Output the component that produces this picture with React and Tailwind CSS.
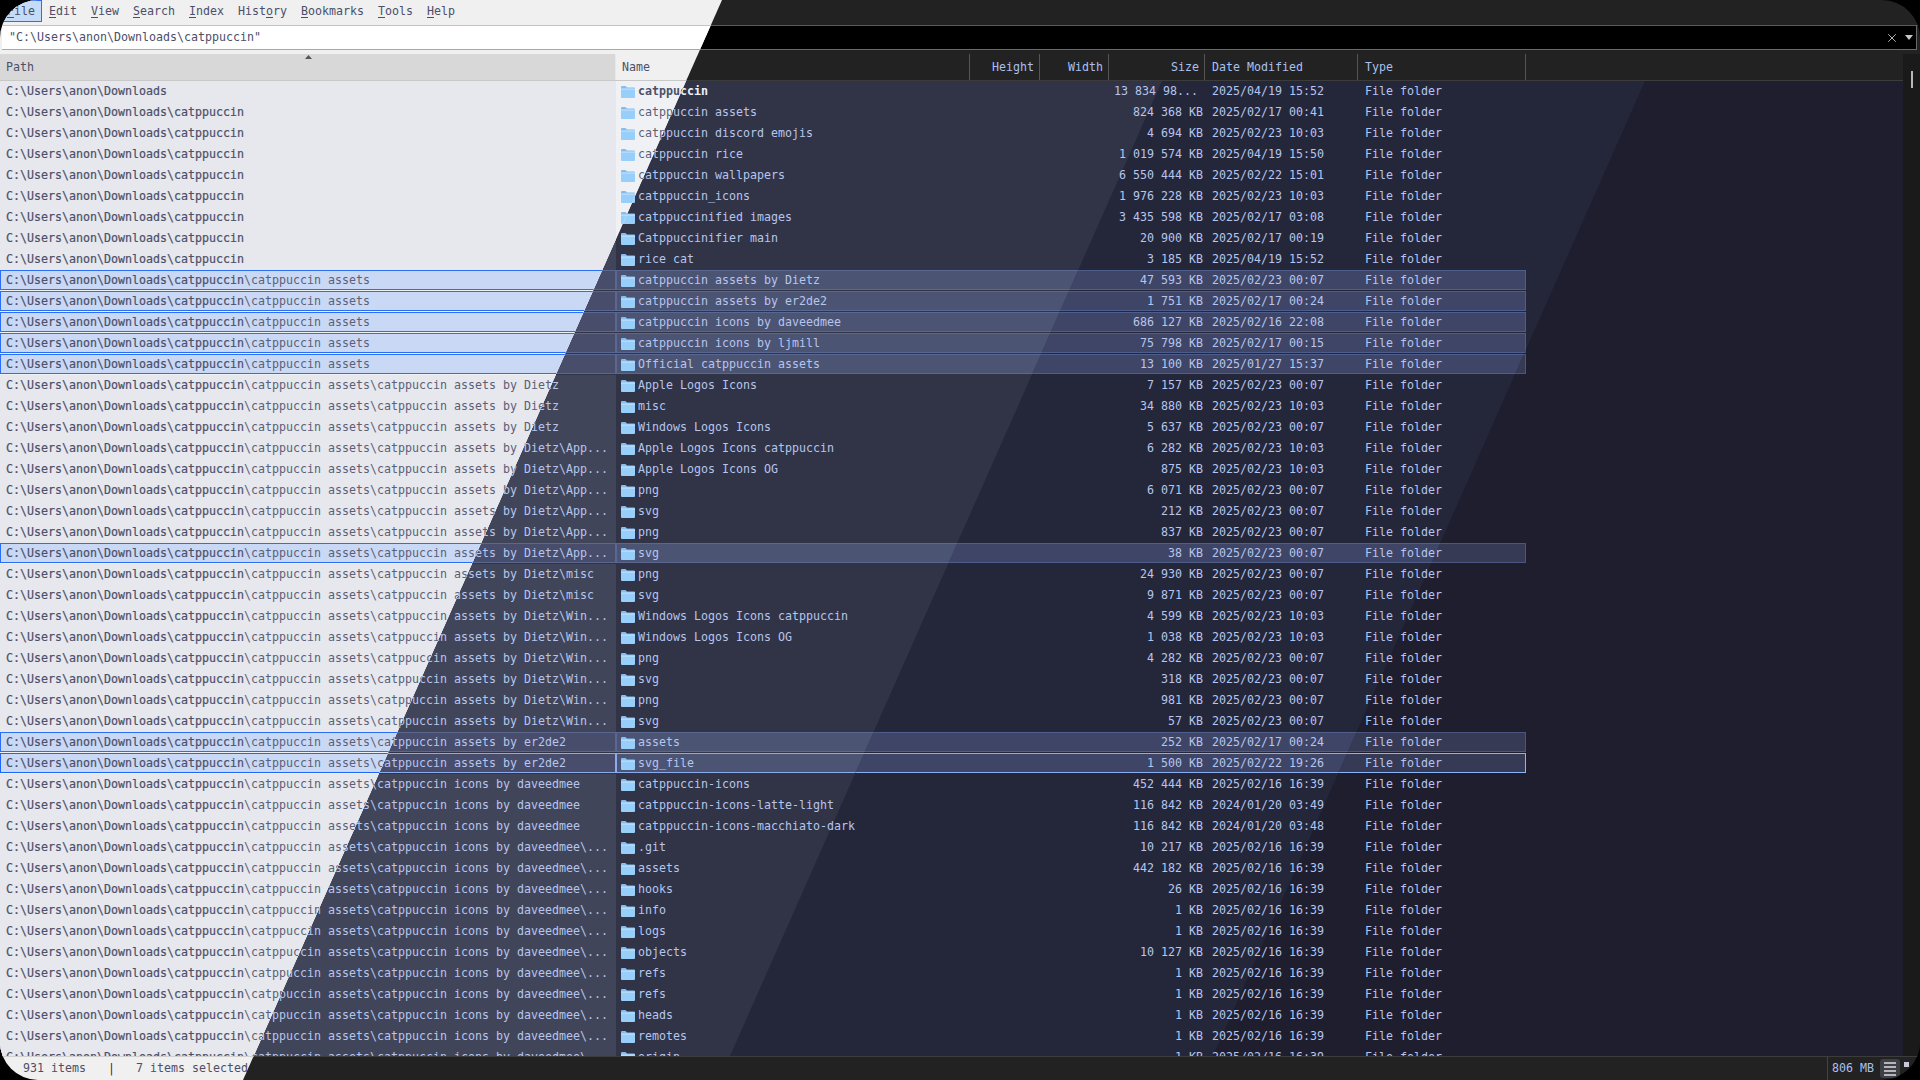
import React from 'react';
import { X } from 'lucide-react';

const ROOT = 'C:\\Users\\anon\\Downloads\\catppuccin';
const A = '\\catppuccin assets';
const D = A + '\\catppuccin assets by Dietz';
const E = A + '\\catppuccin assets by er2de2';
const M = A + '\\catppuccin icons by daveedmee';

const d0 = '2025/02/23 00:07';
const d1 = '2025/02/23 10:03';
const d2 = '2025/02/16 16:39';

// path suffix, name, size, modified, selection
const rows = [
  ['', 'catppuccin', '13 834 98...', '2025/04/19 15:52'],
  ['', 'catppuccin assets', '824 368 KB', '2025/02/17 00:41'],
  ['', 'catppuccin discord emojis', '4 694 KB', d1],
  ['', 'catppuccin rice', '1 019 574 KB', '2025/04/19 15:50'],
  ['', 'catppuccin wallpapers', '6 550 444 KB', '2025/02/22 15:01'],
  ['', 'catppuccin_icons', '1 976 228 KB', d1],
  ['', 'catppuccinified images', '3 435 598 KB', '2025/02/17 03:08'],
  ['', 'Catppuccinifier main', '20 900 KB', '2025/02/17 00:19'],
  ['', 'rice cat', '3 185 KB', '2025/04/19 15:52'],
  [A, 'catppuccin assets by Dietz', '47 593 KB', d0, 'sel'],
  [A, 'catppuccin assets by er2de2', '1 751 KB', '2025/02/17 00:24', 'sel'],
  [A, 'catppuccin icons by daveedmee', '686 127 KB', '2025/02/16 22:08', 'sel'],
  [A, 'catppuccin icons by ljmill', '75 798 KB', '2025/02/17 00:15', 'sel'],
  [A, 'Official catppuccin assets', '13 100 KB', '2025/01/27 15:37', 'sel'],
  [D, 'Apple Logos Icons', '7 157 KB', d0],
  [D, 'misc', '34 880 KB', d1],
  [D, 'Windows Logos Icons', '5 637 KB', d0],
  [D + '\\App...', 'Apple Logos Icons catppuccin', '6 282 KB', d1],
  [D + '\\App...', 'Apple Logos Icons OG', '875 KB', d1],
  [D + '\\App...', 'png', '6 071 KB', d0],
  [D + '\\App...', 'svg', '212 KB', d0],
  [D + '\\App...', 'png', '837 KB', d0],
  [D + '\\App...', 'svg', '38 KB', d0, 'sel'],
  [D + '\\misc', 'png', '24 930 KB', d0],
  [D + '\\misc', 'svg', '9 871 KB', d0],
  [D + '\\Win...', 'Windows Logos Icons catppuccin', '4 599 KB', d1],
  [D + '\\Win...', 'Windows Logos Icons OG', '1 038 KB', d1],
  [D + '\\Win...', 'png', '4 282 KB', d0],
  [D + '\\Win...', 'svg', '318 KB', d0],
  [D + '\\Win...', 'png', '981 KB', d0],
  [D + '\\Win...', 'svg', '57 KB', d0],
  [E, 'assets', '252 KB', '2025/02/17 00:24', 'sel'],
  [E, 'svg_file', '1 500 KB', '2025/02/22 19:26', 'focus'],
  [M, 'catppuccin-icons', '452 444 KB', d2],
  [M, 'catppuccin-icons-latte-light', '116 842 KB', '2024/01/20 03:49'],
  [M, 'catppuccin-icons-macchiato-dark', '116 842 KB', '2024/01/20 03:48'],
  [M + '\\...', '.git', '10 217 KB', d2],
  [M + '\\...', 'assets', '442 182 KB', d2],
  [M + '\\...', 'hooks', '26 KB', d2],
  [M + '\\...', 'info', '1 KB', d2],
  [M + '\\...', 'logs', '1 KB', d2],
  [M + '\\...', 'objects', '10 127 KB', d2],
  [M + '\\...', 'refs', '1 KB', d2],
  [M + '\\...', 'refs', '1 KB', d2],
  [M + '\\...', 'heads', '1 KB', d2],
  [M + '\\...', 'remotes', '1 KB', d2],
  [M + '\\...', 'origin', '1 KB', d2],
];

const COLS = 'grid grid-cols-[616px_354px_70px_69px_96px_153px_168px]';
const HEAD = ['Height', 'Width', 'Size'];

const menus = [
  ['', 'F', 'ile'],
  ['', 'E', 'dit'],
  ['', 'V', 'iew'],
  ['', 'S', 'earch'],
  ['', 'I', 'ndex'],
  ['Hist', 'o', 'ry'],
  ['', 'B', 'ookmarks'],
  ['', 'T', 'ools'],
  ['', 'H', 'elp'],
];

const FolderIcon = () => (
  <svg width="14" height="12" viewBox="0 0 14 12" className="shrink-0">
    <path d="M0 1a1 1 0 0 1 1-1h3.5l1.5 1.5h7a1 1 0 0 1 1 1V3H0z" fill="#86bcee" />
    <path d="M0 2.6h14V11a1 1 0 0 1-1 1H1a1 1 0 0 1-1-1z" fill="#97cefa" />
    <rect x="0" y="2.6" width="14" height="1" fill="#c4e3fc" />
  </svg>
);

// coloured row stripes of one catppuccin flavour, no text in here
const Stripes = ({ t }) => (
  <div className={`absolute inset-0 overflow-hidden ${t.clip} ${t.bg}`}>
    {rows.map((r, i) => (
      <div key={i} className="grid h-[21px] grid-cols-[616px_910px]">
        <div className={r[4] ? `h-[20px] border ${r[4] === 'focus' ? t.focus : t.selBorder} ${t.pathSel}` : `h-[21px] ${t.path}`} />
        <div className={r[4] ? `h-[20px] border ${r[4] === 'focus' ? t.focus : t.selBorder} ${t.sel}` : ''} />
      </div>
    ))}
  </div>
);

const frappe = {
  clip: '[clip-path:polygon(0_0,1162px_0,730px_100%,0_100%)]',
  bg: 'bg-[#303446]',
  path: 'bg-[#414559]',
  pathSel: 'bg-[#474d6b]',
  sel: 'bg-[#4c5474]',
  selBorder: 'border-[#5a6791]',
  focus: 'border-[#8caaee]',
};
const macchiato = {
  clip: '[clip-path:polygon(0_0,1645px_0,1213px_100%,0_100%)]',
  bg: 'bg-[#24273a]',
  path: 'bg-[#363a4f]',
  pathSel: 'bg-[#3e4566]',
  sel: 'bg-[#3e4566]',
  selBorder: 'border-[#4f5d8a]',
  focus: 'border-[#8aadf4]',
};
const mocha = {
  clip: '',
  bg: 'bg-[#1e1e2e]',
  path: 'bg-[#313244]',
  pathSel: 'bg-[#363a55]',
  sel: 'bg-[#363a55]',
  selBorder: 'border-[#4a5680]',
  focus: 'border-[#89b4fa]',
};
const latte = {
  clip: '',
  bg: 'bg-[#eff1f5]',
  path: 'bg-[#e6e8ed]',
  pathSel: 'bg-[#c9d9f5]',
  sel: 'bg-[#c9d9f5]',
  selBorder: 'border-[#2a6ef5]',
  focus: 'border-[#1e66f5]',
};

const PathText = ({ r, i, hi }) => (
  <div className="truncate pl-[6px]">
    <span className={`[-webkit-text-stroke:0.2px] ${hi}`}>{i === 0 ? 'C:\\Users\\anon\\Downloads' : ROOT}</span>
    {r[0]}
  </div>
);

const NameText = ({ r, i, hi }) => (
  <div className="flex items-center pl-[5px]">
    <FolderIcon />
    <span className={`ml-[3px] whitespace-pre ${i === 0 ? `font-bold ${hi}` : ''}`}>{r[1]}</span>
  </div>
);

const DarkWindow = () => (
  <div className="flex h-full flex-col bg-[#222222] text-[#b7c5ee]">
    <div className="h-[26px] border-b border-[#5a5a5a]" />
    <div className="flex h-[24px] items-center justify-end border-x border-b border-[#6a6a6a] bg-black pr-[3px] mr-[3px] ml-[2px]">
      <X size={14} strokeWidth={1.5} className="mr-[6px] text-[#cccccc]" />
      <svg width="8" height="5" viewBox="0 0 8 5"><path d="M0 0h8L4 5z" fill="#c8c8c8" /></svg>
    </div>
    <div className="flex flex-1 flex-col pt-[4px] overflow-hidden">
      <div className="flex min-h-0 flex-1">
        <div className="flex min-w-0 flex-1 flex-col">
          <div className={`${COLS} h-[27px] shrink-0 border-b border-[#3c3c3c] text-[#a9c0ee]`}>
            <div className="border-r border-[#555555] pl-[6px] leading-[26px]">Path</div>
            <div className="border-r border-[#555555] pl-[6px] leading-[26px]">Name</div>
            {HEAD.map((h) => (
              <div key={h} className="border-r border-[#555555] pr-[5px] text-right leading-[26px]">{h}</div>
            ))}
            <div className="border-r border-[#555555] pl-[7px] leading-[26px]">Date Modified</div>
            <div className="border-r border-[#555555] pl-[7px] leading-[26px]">Type</div>
          </div>
          <div className="relative flex-1 overflow-hidden">
            <Stripes t={mocha} />
            <Stripes t={macchiato} />
            <Stripes t={frappe} />
            <div className="relative">
              {rows.map((r, i) => (
                <div key={i} className={`${COLS} h-[21px] items-center whitespace-pre`}>
                  <PathText r={r} i={i} hi="" />
                  <NameText r={r} i={i} hi="text-[#eef1fc]" />
                  <div />
                  <div />
                  <div className={`text-right ${r[2].endsWith('...') ? 'pr-[7px]' : 'pr-[2px]'}`}>{r[2]}</div>
                  <div className="pl-[7px]">{r[3]}</div>
                  <div className="pl-[7px]">File folder</div>
                </div>
              ))}
            </div>
          </div>
        </div>
        <div className="relative w-[17px] shrink-0 bg-[#1a1a1a]">
          <div className="absolute left-[8px] top-[17px] h-[17px] w-[2px] bg-[#b8b8b8]" />
        </div>
      </div>
    </div>
    <div className="flex h-[24px] shrink-0 items-center justify-end border-t border-[#3c3c3c] pr-[11px] text-[#a9c0ee]">
      <div className="flex h-full items-center border-l border-[#444444] pl-[4px]">806 MB</div>
      <div className="ml-[6px] flex h-[19px] w-[20px] flex-col items-center justify-center gap-[2px] rounded-[3px] bg-[#3f3f46]">
        <div className="h-[2px] w-[12px] bg-[#b5b5bd]" />
        <div className="h-[2px] w-[12px] bg-[#b5b5bd]" />
        <div className="h-[2px] w-[12px] bg-[#b5b5bd]" />
        <div className="h-[2px] w-[12px] bg-[#b5b5bd]" />
      </div>
      <div className="ml-[4px] h-[5px] w-[5px] self-start mt-[5px] bg-[#c8c8d8]" />
    </div>
  </div>
);

const LightWindow = () => (
  <div className="absolute inset-0 flex flex-col bg-[#f0f0f0] text-[#5c5f77] [clip-path:polygon(722px_0,243px_100%,0_100%,0_0)]">
    <div className="flex h-[26px] shrink-0 border-b border-[#c4c4c4] text-[#4c4f69]">
      {menus.map((m, i) => (
        <div key={i} className={i === 0 ? 'mb-[3px] border border-[#2f6fef] bg-[#c5dcf9] px-[6px] leading-[21px]' : 'px-[7px] leading-[23px]'}>
          {m[0]}<span className="underline underline-offset-2">{m[1]}</span>{m[2]}
        </div>
      ))}
    </div>
    <div className="ml-[2px] flex h-[24px] shrink-0 items-center border-b border-[#a8a8a8] bg-white pl-[7px] pt-[1px] text-[#4c4f69]">
      "C:\Users\anon\Downloads\catppuccin"
    </div>
    <div className="h-[4px] shrink-0" />
    <div className="relative grid h-[27px] shrink-0 grid-cols-[616px_1fr] border-b border-[#c8c8c8] text-[#4c4f69]">
      <div className="border-r border-[#e8e8e8] bg-[#d8d8d8] pl-[6px] leading-[26px]">Path</div>
      <div className="pl-[6px] leading-[26px]">Name</div>
      <svg width="7" height="4" viewBox="0 0 7 4" className="absolute left-[305px] top-[1px]">
        <path d="M3.5 0L7 4H0z" fill="#555555" />
      </svg>
    </div>
    <div className="relative flex-1 overflow-hidden">
      <Stripes t={latte} />
      <div className="relative">
        {rows.map((r, i) => (
          <div key={i} className="grid h-[21px] grid-cols-[616px_1fr] items-center whitespace-pre">
            <PathText r={r} i={i} hi="text-[#4c4f69]" />
            <NameText r={r} i={i} hi="text-[#4c4f69]" />
          </div>
        ))}
      </div>
    </div>
    <div className="flex h-[24px] shrink-0 items-center border-t border-[#d0d0d0] pl-[23px] text-[#4c4f69]">
      <span>931 items</span>
      <span className="ml-[22px] text-[#7a1020]">|</span>
      <span className="ml-[21px]">7 items selected</span>
    </div>
  </div>
);

export default function App() {
  return (
    <div className="h-screen w-screen bg-black">
      <div className="relative h-full w-full overflow-hidden rounded-[38px] font-['DejaVu_Sans_Mono','Liberation_Mono',monospace] text-[11.63px]">
        <DarkWindow />
        <LightWindow />
      </div>
    </div>
  );
}
